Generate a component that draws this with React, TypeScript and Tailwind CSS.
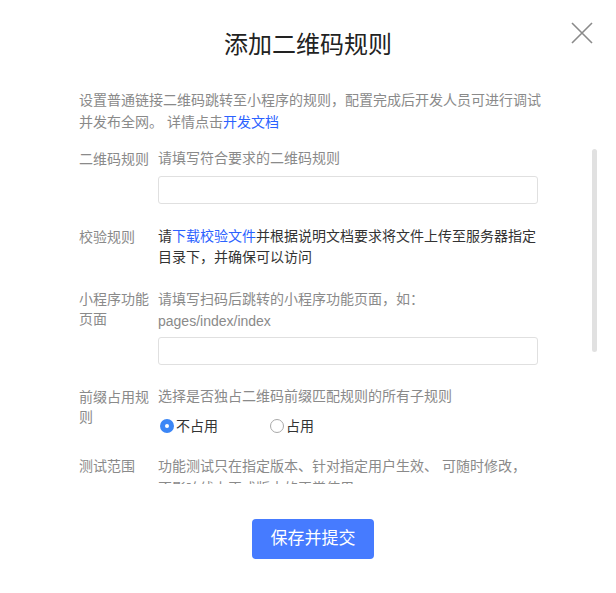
import { useState } from "react";

const FONT = "font-['Liberation_Sans','Noto_Sans_CJK_SC',sans-serif]";

type RuleRowProps = {
	label: string;
	children: React.ReactNode;
	className?: string;
};

function RuleRow({ label, children, className = "" }: RuleRowProps) {
	return (
		<div className={`flex ${className}`}>
			<div className="w-[79px] shrink-0 pt-[1px] text-[14px] leading-[20px] text-[#8a8a8a]">{label}</div>
			<div className="w-[380px] text-[14px] leading-[21px]">{children}</div>
		</div>
	);
}

function Radio({ checked, label, onSelect }: { checked: boolean; label: string; onSelect: () => void }) {
	return (
		<button type="button" onClick={onSelect} className="flex items-center text-[14px] leading-[22px] text-[#333]">
			{checked ? (
				<span className="mr-[2px] flex size-[14px] items-center justify-center rounded-full bg-[#3b86f6]">
					<span className="size-[4px] rounded-full bg-white" />
				</span>
			) : (
				<span className="mr-[2px] size-[14px] rounded-full border border-[#a9a9a9] bg-white" />
			)}
			{label}
		</button>
	);
}

export default function App() {
	const [occupy, setOccupy] = useState(false);

	return (
		<div className={`relative h-[593px] w-[616px] overflow-hidden bg-white ${FONT}`}>
			<button type="button" aria-label="关闭" className="absolute left-[571px] top-[22px] size-[22px]">
				<svg viewBox="0 0 22 22" className="size-[22px]" fill="none" stroke="#8a8a8a" strokeWidth="1.6">
					<path d="M1 1L21 21M21 1L1 21" />
				</svg>
			</button>

			<h1 className="pt-[31px] text-center text-[24px] leading-[28px] text-[#222]">添加二维码规则</h1>

			<p className="ml-[79px] mt-[30px] w-[466px] text-[14px] leading-[22px] text-[#8a8a8a]">
				设置普通链接二维码跳转至小程序的规则，配置完成后开发人员可进行调试并发布全网。 详情点击
				<a className="text-[#2b62ff]">开发文档</a>
			</p>

			<div className="relative mt-[12px] h-[339px] overflow-hidden">
				<div className="absolute right-[19px] top-[4px] h-[203px] w-[5px] rounded-full bg-[#e1e1e1]" />

				<div className="px-[79px] pt-[3px]">
					<RuleRow label="二维码规则">
						<div className="text-[#8a8a8a]">请填写符合要求的二维码规则</div>
						<input className="mt-[7px] block h-[28px] w-[380px] rounded-[3px] border border-[#e0e0e0] outline-none" />
					</RuleRow>

					<RuleRow label="校验规则" className="mt-[22px]">
						<div className="text-[#333]">
							请<a className="text-[#2b62ff]">下载校验文件</a>并根据说明文档要求将文件上传至服务器指定目录下，并确保可以访问
						</div>
					</RuleRow>

					<RuleRow label="小程序功能页面" className="mt-[20px]">
						<div className="leading-[22px] text-[#8a8a8a]">请填写扫码后跳转的小程序功能页面，如：</div>
						<div className="leading-[22px] text-[#8a8a8a]">pages/index/index</div>
						<input className="mt-[5px] block h-[28px] w-[380px] rounded-[3px] border border-[#e0e0e0] outline-none" />
					</RuleRow>

					<RuleRow label="前缀占用规则" className="mt-[21px]">
						<div className="text-[#8a8a8a]">选择是否独占二维码前缀匹配规则的所有子规则</div>
						<div className="mt-[8px] flex pl-[2px]">
							<div className="w-[110px]">
								<Radio checked={!occupy} label="不占用" onSelect={() => setOccupy(false)} />
							</div>
							<Radio checked={occupy} label="占用" onSelect={() => setOccupy(true)} />
						</div>
					</RuleRow>

					<RuleRow label="测试范围" className="mt-[18px]">
						<div className="leading-[22px] text-[#8a8a8a]">
							功能测试只在指定版本、针对指定用户生效、 可随时修改，不影响线上正式版本的正常使用
						</div>
					</RuleRow>
				</div>
			</div>

			<div className="mt-[35px] flex justify-center pl-[10px]">
				<button
					type="button"
					className="h-[40px] w-[122px] rounded-[4px] bg-[#467bff] text-[17px] text-white"
				>
					保存并提交
				</button>
			</div>
		</div>
	);
}
